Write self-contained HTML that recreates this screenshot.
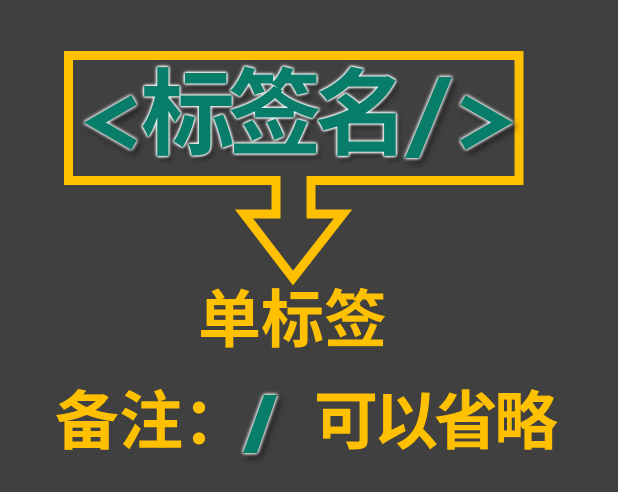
<!DOCTYPE html>
<html><head><meta charset="utf-8"><style>
html,body{margin:0;padding:0}
body{width:618px;height:492px;background:#404040;position:relative;overflow:hidden;font-family:"Liberation Sans","Noto Sans CJK SC",sans-serif;font-weight:bold}
.g{position:absolute;color:#077d6a;font-size:94px;line-height:1;text-shadow:0 0 2px #fff,0 0 2px #fff,0 0 3px #fff,0 0 4px #fff,3px 4px 5px rgba(0,0,0,.5)}
.y{position:absolute;color:#ffc000;font-size:64px;line-height:1}
svg{position:absolute;left:0;top:0}
.gl{filter:drop-shadow(0 0 1.5px #fff) drop-shadow(0 0 1.5px #fff) drop-shadow(3px 4px 3px rgba(0,0,0,.5))}
</style></head><body>
<svg width="618" height="492">
<path d="M68.5 55.5 H519 V180.5 H311 V214 H343 L293 278 L244 214 H276 V180.5 H68.5 Z" fill="none" stroke="#ffc000" stroke-width="9" stroke-linejoin="miter"/>
</svg>
<svg width="618" height="492" class="gl">
<polyline points="134,100 95,122.5 134,145" fill="none" stroke="#077d6a" stroke-width="11" stroke-linejoin="miter"/>
<polygon points="439,77 452,77 419,158 405,158" fill="#077d6a"/>
<polyline points="463,100 502,122.5 463,145" fill="none" stroke="#077d6a" stroke-width="11" stroke-linejoin="miter"/>
<polygon points="264,395 277,395 257,453 243,453" fill="#077d6a"/>
</svg>
<span class="g" style="left:141px;top:68px">标</span>
<span class="g" style="left:228px;top:68px">签</span>
<span class="g" style="left:315px;top:68px">名</span>
<span class="y" style="left:198px;top:290px;font-size:63px">单标签</span>
<span class="y" style="left:55px;top:390px">备注：</span>
<span class="y" style="left:314px;top:390px;letter-spacing:-4px">可以省略</span>
</body></html>
